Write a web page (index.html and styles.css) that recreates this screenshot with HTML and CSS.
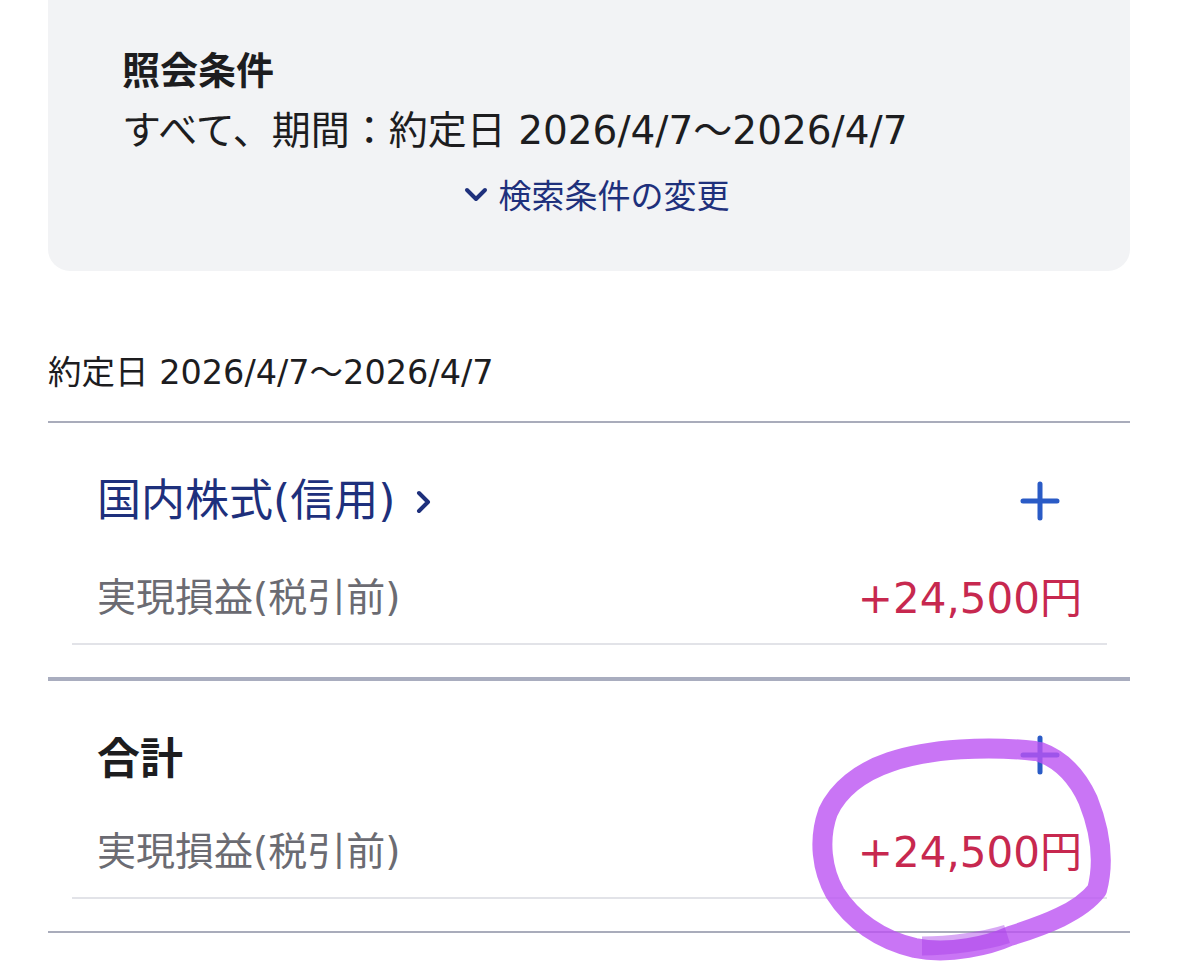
FILE: index.html
```html
<!DOCTYPE html>
<html lang="ja">
<head>
<meta charset="utf-8">
<title>照会結果</title>
<link rel="stylesheet" href="styles.css">
</head>
<body>
<div class="page">
  <div class="card">
    <div class="card-title">照会条件</div>
    <div class="card-desc">すべて、期間：約定日 2026/4/7〜2026/4/7</div>
    <div class="card-link">
      <svg class="chev-down" viewBox="0 0 24 16" width="26" height="16"><path d="M3 3 L12 12 L21 3" fill="none" stroke="currentColor" stroke-width="4" stroke-linecap="round" stroke-linejoin="round"/></svg>
      <span>検索条件の変更</span>
    </div>
  </div>

  <div class="date-range">約定日 2026/4/7〜2026/4/7</div>

  <section class="section first">
    <div class="sec-head">
      <div class="sec-title link">国内株式(信用)
        <svg class="chev-right" viewBox="0 0 16 24" width="16" height="24"><path d="M3 3 L12 12 L3 21" fill="none" stroke="currentColor" stroke-width="4" stroke-linecap="round" stroke-linejoin="round"/></svg>
      </div>
      <svg class="plus" viewBox="0 0 40 40" width="40" height="40"><path d="M20 3 V37 M3 20 H37" stroke="currentColor" stroke-width="5" stroke-linecap="round"/></svg>
    </div>
    <div class="row">
      <span class="row-label">実現損益(税引前)</span>
      <span class="row-value">+24,500円</span>
    </div>
    <div class="thin"></div>
  </section>

  <section class="section total">
    <div class="sec-head">
      <div class="sec-title bold">合計</div>
      <svg class="plus" viewBox="0 0 40 40" width="40" height="40"><path d="M20 3 V37 M3 20 H37" stroke="currentColor" stroke-width="5" stroke-linecap="round"/></svg>
    </div>
    <div class="row">
      <span class="row-label">実現損益(税引前)</span>
      <span class="row-value">+24,500円</span>
    </div>
    <div class="thin"></div>
  </section>
  <div class="end-line"></div>
</div>

<svg class="annot" viewBox="0 0 1179 975" width="1179" height="975">
  <path d="M1035 751 C990 746 930 748 890 762 C860 772 838 790 828 812 C818 840 822 870 835 893 C852 920 880 940 915 948 C950 955 990 945 1010 936 C1045 925 1080 912 1097 890 C1105 860 1100 830 1088 800 C1078 778 1062 760 1040 752"
        fill="none" stroke="#bb52f3" stroke-opacity="0.8" stroke-width="20" stroke-linecap="round" stroke-linejoin="round"/>
  <path d="M922 946 C950 946 985 941 1007 934" fill="none" stroke="#a93ee8" stroke-opacity="0.45" stroke-width="19" stroke-linecap="butt"/>
</svg>
</body>
</html>
```

FILE: styles.css
```css
html, body {
  margin: 0;
  padding: 0;
  background: #ffffff;
}
body {
  width: 1179px;
  height: 975px;
  overflow: hidden;
  position: relative;
  font-family: "DejaVu Sans", "Noto Sans CJK JP", sans-serif;
  color: #1d1d1f;
}
.page {
  padding: 0 49px 0 48px;
}
.card {
  margin-top: -40px;
  background: #f2f3f5;
  border-radius: 22px;
  padding: 76px 30px 45px 74px;
}
.card-title {
  font-family: "Noto Sans CJK JP", sans-serif;
  font-weight: 700;
  font-size: 38px;
  line-height: 63px;
  height: 63px;
  color: #1d1d1f;
}
.card-desc {
  font-size: 39px;
  line-height: 63px;
  height: 63px;
  color: #1d1d1f;
  white-space: nowrap;
}
.card-link {
  display: flex;
  justify-content: center;
  align-items: center;
  gap: 10px;
  height: 64px;
  font-family: "Noto Sans CJK JP", sans-serif;
  font-size: 33px;
  color: #1e307c;
  margin-left: -30px;
}
.chev-down {
  display: block;
  margin-top: 2px;
}
.date-range {
  margin-top: 77px;
  height: 50px;
  line-height: 50px;
  font-size: 33.5px;
  color: #1d1d1f;
  margin-bottom: 23px;
}
.section.first {
  border-top: 2px solid #a9acbb;
  padding-top: 48px;
}
.section.total {
  border-top: 4px solid #a9adbf;
  padding-top: 44px;
}
.sec-head {
  display: flex;
  align-items: center;
  justify-content: space-between;
  height: 60px;
  padding: 0 70px 0 49px;
}
.sec-title {
  font-size: 44px;
  line-height: 60px;
  display: flex;
  align-items: center;
}
.sec-title.link {
  color: #1e307c;
}
.chev-right {
  margin-left: 21px;
  margin-top: 2px;
}
.sec-title.bold {
  font-family: "Noto Sans CJK JP", sans-serif;
  font-weight: 700;
  font-size: 43px;
  color: #1d1d1f;
}
.plus {
  color: #2a5bc6;
  display: block;
}
.row {
  display: flex;
  justify-content: space-between;
  align-items: center;
  height: 60px;
  margin-top: 33px;
  padding: 0 48px 0 49px;
}
.row-label {
  font-size: 39px;
  color: #6b6b72;
}
.row-value {
  font-size: 42px;
  color: #c7284f;
}
.thin {
  height: 2px;
  background: #e2e3e8;
  margin: 19px 23px 0 24px;
}
.first .thin {
  margin-bottom: 32px;
}
.total .thin {
  margin-bottom: 32px;
}
.end-line {
  height: 2px;
  background: #a9acbb;
}
.annot {
  position: absolute;
  left: 0;
  top: 0;
  pointer-events: none;
}
```
